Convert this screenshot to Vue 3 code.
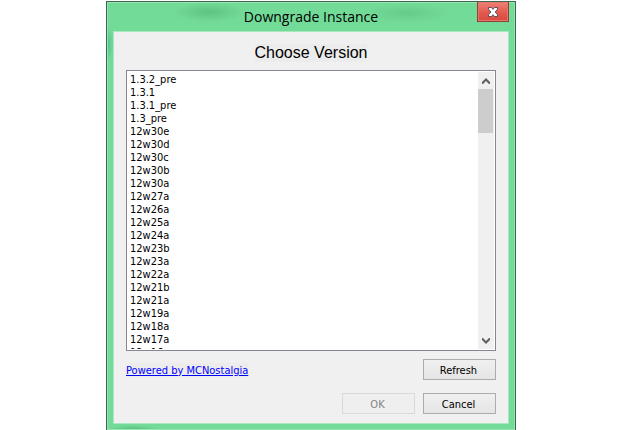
<script setup>
import { ref } from 'vue'

const versions = [
  '1.3.2_pre', '1.3.1', '1.3.1_pre', '1.3_pre', '12w30e', '12w30d', '12w30c',
  '12w30b', '12w30a', '12w27a', '12w26a', '12w25a', '12w24a', '12w23b',
  '12w23a', '12w22a', '12w21b', '12w21a', '12w19a', '12w18a', '12w17a',
  '12w16a', '12w15a', '12w08a', '12w07b', '12w06a'
]
const selected = ref([])
const list = ref(null)

function scrollList(rows) {
  list.value.scrollTop += rows * 13
}
</script>

<template>
  <section class="window" aria-labelledby="window-title">
    <header class="titlebar">
      <h1 id="window-title">Downgrade Instance</h1>
      <button class="close" type="button" aria-label="Close">
        <svg width="12" height="12" viewBox="0 0 12 12" aria-hidden="true">
          <path d="M1.5 1.5H4.5L6 3.3 7.5 1.5H10.5V3.2L8.2 6 10.5 8.8V10.5H7.5L6 8.7 4.5 10.5H1.5V8.8L3.8 6 1.5 3.2Z" fill="#fff" stroke="#5b5162" stroke-width="1" />
        </svg>
      </button>
    </header>
    <main class="content">
      <label class="heading" for="version-list">Choose Version</label>
      <div class="listbox">
        <select id="version-list" ref="list" v-model="selected" multiple size="21">
          <option v-for="version in versions" :key="version" :value="version">{{ version }}</option>
        </select>
        <div class="scrollbar">
          <button type="button" aria-label="Scroll up" @click="scrollList(-1)">
            <svg width="8" height="6" viewBox="0 0 8 6" aria-hidden="true">
              <path d="M4 0 8 4V6H7L4 3 1 6H0V4Z" fill="#606060" />
            </svg>
          </button>
          <div class="track"><div class="thumb"></div></div>
          <button type="button" aria-label="Scroll down" @click="scrollList(1)">
            <svg width="8" height="6" viewBox="0 0 8 6" aria-hidden="true">
              <path d="M4 6 8 2V0H7L4 3 1 0H0V2Z" fill="#606060" />
            </svg>
          </button>
        </div>
      </div>
      <div class="row credit">
        <a href="#mcnostalgia">Powered by MCNostalgia</a>
        <button class="push" type="button">Refresh</button>
      </div>
      <div class="row actions">
        <button class="push" type="button" disabled>OK</button>
        <button class="push" type="button">Cancel</button>
      </div>
    </main>
  </section>
</template>

<style>
body {
  margin: 0;
  background: #fff;
}
</style>

<style scoped>
* {
  box-sizing: border-box;
}

.window {
  display: flex;
  flex-direction: column;
  margin: 1px 104px 0 106px;
  min-height: calc(100vh - 1px);
  padding: 0 6px 6px;
  border: 1px solid #3b6650;
  border-bottom: 0;
  background:
    radial-gradient(ellipse 6px 18px at 0 42px, #4fbf92, #4fbf9200),
    radial-gradient(ellipse 36px 10px at 102px 10px, #58bd7acc, #58bd7a00),
    radial-gradient(ellipse 44px 10px at 300px 11px, #60c584b3, #60c58400),
    radial-gradient(ellipse 26px 5px at 26px 100%, #55bd78, #55bd7800),
    #73db98;
  box-shadow: inset 1px 1px #97e5b2, inset -1px -1px #97e5b2;
  font-family: "DejaVu Sans Condensed", "DejaVu Sans", sans-serif;
  font-size: 11px;
  color: #000;
}

.titlebar {
  display: grid;
  grid-template-columns: 32px 1fr 32px;
  height: 29px;
}

h1 {
  grid-column: 2;
  margin: 0;
  font: 14px/30px "Open Sans", "Noto Sans", sans-serif;
  text-align: center;
}

button {
  display: flex;
  align-items: center;
  justify-content: center;
  padding: 0;
  font: inherit;
  color: inherit;
}

.close {
  height: 20px;
  border: 1px solid #8f3f36;
  border-top: 0;
  background: linear-gradient(#ef8277, #e2574b 60%, #da4a3e);
  box-shadow: inset 0 0 0 1px #e6776c;
}

.content {
  flex: 1;
  display: flex;
  flex-direction: column;
  padding: 12px 12px 9px;
  border: 1px solid #a9e8bf;
  background: #f0f0f0;
}

.heading {
  align-self: center;
  margin-bottom: 8px;
  background: #ececec;
  font: 16px/18px "Liberation Sans", Arial, sans-serif;
}

.listbox {
  display: flex;
  height: 281px;
  padding: 1px;
  border: 1px solid #828790;
  background: #fff;
}

select {
  flex: 1;
  min-width: 0;
  height: 100%;
  margin: 0;
  padding: 1px 0 0;
  border: 0;
  border-radius: 0;
  outline: 0;
  background: #fff;
  font: inherit;
  color: inherit;
  scrollbar-width: none;
}

option {
  min-height: 13px;
  height: 13px;
  padding: 0 2px;
  line-height: 13px;
}

.scrollbar {
  display: flex;
  flex-direction: column;
  width: 16px;
  background: #f0f0f0;
}

.scrollbar button {
  height: 17px;
  border: 0;
  background: transparent;
}

.track {
  flex: 1;
}

.thumb {
  height: 44px;
  margin-right: 1px;
  background: #cdcdcd;
}

.row {
  display: flex;
  align-items: center;
}

.credit {
  justify-content: space-between;
  margin-top: 8px;
}

.actions {
  justify-content: flex-end;
  gap: 8px;
  margin-top: 13px;
}

a {
  padding-top: 1px;
  background: #ececec;
  color: #0000ff;
}

.push {
  width: 73px;
  height: 21px;
  padding: 1px 2px 0 0;
  border: 1px solid #acacac;
  background: linear-gradient(#f0f0f0, #e5e5e5);
}

.push:disabled {
  border-color: #d9d9d9;
  background: #efefef;
  color: #838383;
}
</style>
